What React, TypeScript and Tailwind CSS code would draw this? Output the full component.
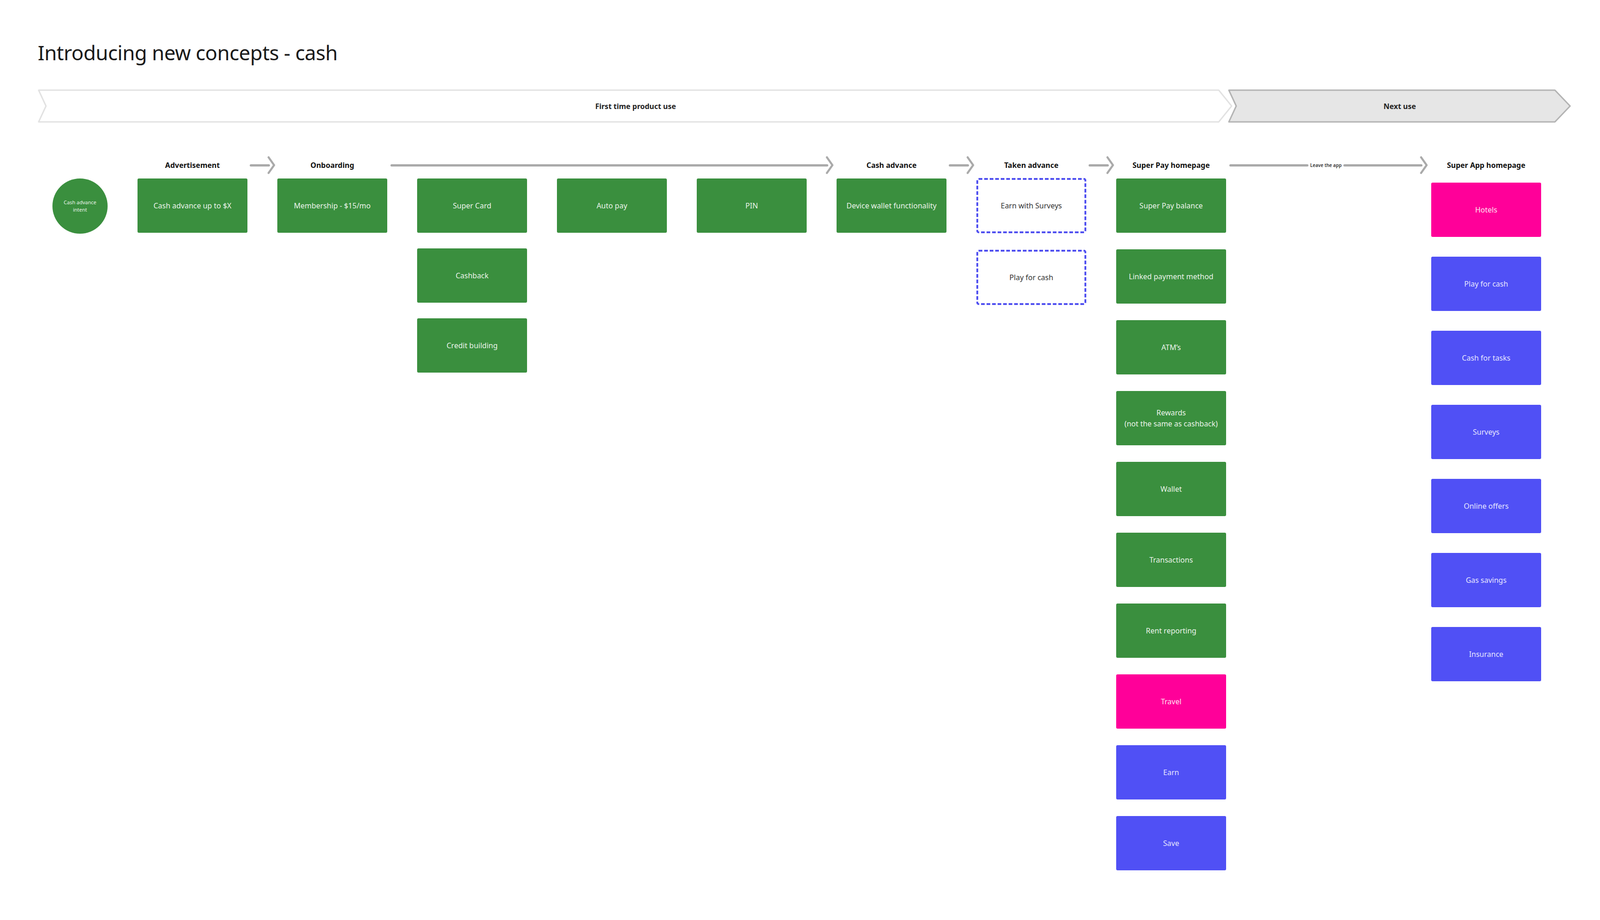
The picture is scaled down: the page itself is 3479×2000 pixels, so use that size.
import React from 'react'

const green = 'bg-[#3a8f3e] text-[#eaf4ea]'
const pink = 'bg-[#ff0099] text-[#ffe0f2]'
const blue = 'bg-[#5050f5] text-[#e6e6ff]'

function Box({ label, color }: { label: React.ReactNode; color: string }) {
  return (
    <div className={`w-[239px] h-[118px] rounded-[3px] flex items-center justify-center text-center text-[16px] leading-[24px] ${color}`}>
      {label}
    </div>
  )
}

function Dashed({ label }: { label: string }) {
  return (
    <div className="w-[239px] h-[120px] rounded-[5px] border-[4px] border-dashed border-[#5050f0] flex items-center justify-center text-[16px] text-[#333]">
      {label}
    </div>
  )
}

function Arrow({ width, label }: { width: number | string; label?: string }) {
  return (
    <div className="flex items-center h-[40px]" style={{ width }}>
      {label ? (
        <>
          <div className="flex-1 h-[5px] bg-[#aaaaaa] rounded-full" />
          <span className="px-[4px] text-[10px] font-semibold text-[#333]">{label}</span>
          <div className="flex-1 h-[5px] bg-[#aaaaaa] rounded-full -mr-[6px]" />
        </>
      ) : (
        <div className="flex-1 h-[5px] bg-[#aaaaaa] rounded-full -mr-[6px]" />
      )}
      <svg width="18" height="40" viewBox="0 0 18 40" className="shrink-0">
        <path d="M3 3 L15 20 L3 37" fill="none" stroke="#aaaaaa" strokeWidth="4.5" strokeLinecap="round" strokeLinejoin="round" />
      </svg>
    </div>
  )
}

function Header({ text }: { text: string }) {
  return <div className="w-[239px] text-center text-[16px] font-bold text-[#111]">{text}</div>
}

export default function App() {
  return (
    <div className="w-[3479px] h-[2000px] bg-white pl-[82px] pt-[86px] font-['Inter','Liberation_Sans',sans-serif]">
      <h1 className="text-[44px] leading-[56px] text-[#1a1a1a] tracking-[-0.5px]">Introducing new concepts - cash</h1>

      {/* phase band */}
      <div className="flex mt-[52px] h-[73px] w-[3335px]">
        <div className="relative w-[2600px] h-full">
          <svg className="absolute inset-0" width="2600" height="73" viewBox="0 0 2600 73">
            <path d="M2 2 H2568 L2596 36.5 L2568 71 H2 L18 36.5 Z" fill="#fff" stroke="#e2e2e2" strokeWidth="3" strokeLinejoin="round" />
          </svg>
          <div className="absolute inset-0 flex items-center justify-center text-[16px] font-bold text-[#222]">First time product use</div>
        </div>
        <div className="relative w-[747px] h-full -ml-[12px]">
          <svg className="absolute inset-0" width="747" height="73" viewBox="0 0 747 73">
            <path d="M2 2 H711 L744 36.5 L711 71 H2 L18 36.5 Z" fill="#e6e6e6" stroke="#b3b3b3" strokeWidth="3" strokeLinejoin="round" />
          </svg>
          <div className="absolute inset-0 flex items-center justify-center text-[16px] font-bold text-[#222]">Next use</div>
        </div>
      </div>

      {/* header row */}
      <div className="flex items-center mt-[72px] h-[40px]">
        <div className="w-[217px]" />
        <Header text="Advertisement" />
        <div className="w-[65px] flex justify-center"><Arrow width={56} /></div>
        <Header text="Onboarding" />
        <div className="w-[977px] flex justify-center"><Arrow width={964} /></div>
        <Header text="Cash advance" />
        <div className="w-[65px] flex justify-center"><Arrow width={56} /></div>
        <Header text="Taken advance" />
        <div className="w-[65px] flex justify-center"><Arrow width={56} /></div>
        <Header text="Super Pay homepage" />
        <div className="w-[446px] flex justify-center"><Arrow width={432} label="Leave the app" /></div>
        <Header text="Super App homepage" />
      </div>

      {/* boxes */}
      <div className="flex items-start mt-[9px]">
        <div className="w-[217px] flex">
          <div className="ml-[32px] w-[120px] h-[120px] rounded-full bg-[#3a8f3e] text-[#eaf4ea] text-[11px] leading-[16px] flex items-center justify-center text-center">
            Cash advance<br />intent
          </div>
        </div>
        <div className="flex gap-[65px] items-start">
          <Box label="Cash advance up to $X" color={green} />
          <Box label="Membership - $15/mo" color={green} />
          <div className="flex flex-col gap-[34px]">
            <Box label="Super Card" color={green} />
            <Box label="Cashback" color={green} />
            <Box label="Credit building" color={green} />
          </div>
          <Box label="Auto pay" color={green} />
          <Box label="PIN" color={green} />
          <Box label="Device wallet functionality" color={green} />
          <div className="flex flex-col gap-[36px] -mt-[1px]">
            <Dashed label="Earn with Surveys" />
            <Dashed label="Play for cash" />
          </div>
          <div className="flex flex-col gap-[36px]">
            <Box label="Super Pay balance" color={green} />
            <Box label="Linked payment method" color={green} />
            <Box label="ATM’s" color={green} />
            <Box label={<span>Rewards<br />(not the same as cashback)</span>} color={green} />
            <Box label="Wallet" color={green} />
            <Box label="Transactions" color={green} />
            <Box label="Rent reporting" color={green} />
            <Box label="Travel" color={pink} />
            <Box label="Earn" color={blue} />
            <Box label="Save" color={blue} />
          </div>
        </div>
        <div className="flex flex-col gap-[43px] ml-[446px] mt-[9px]">
          <Box label="Hotels" color={pink} />
          <Box label="Play for cash" color={blue} />
          <Box label="Cash for tasks" color={blue} />
          <Box label="Surveys" color={blue} />
          <Box label="Online offers" color={blue} />
          <Box label="Gas savings" color={blue} />
          <Box label="Insurance" color={blue} />
        </div>
      </div>
    </div>
  )
}
